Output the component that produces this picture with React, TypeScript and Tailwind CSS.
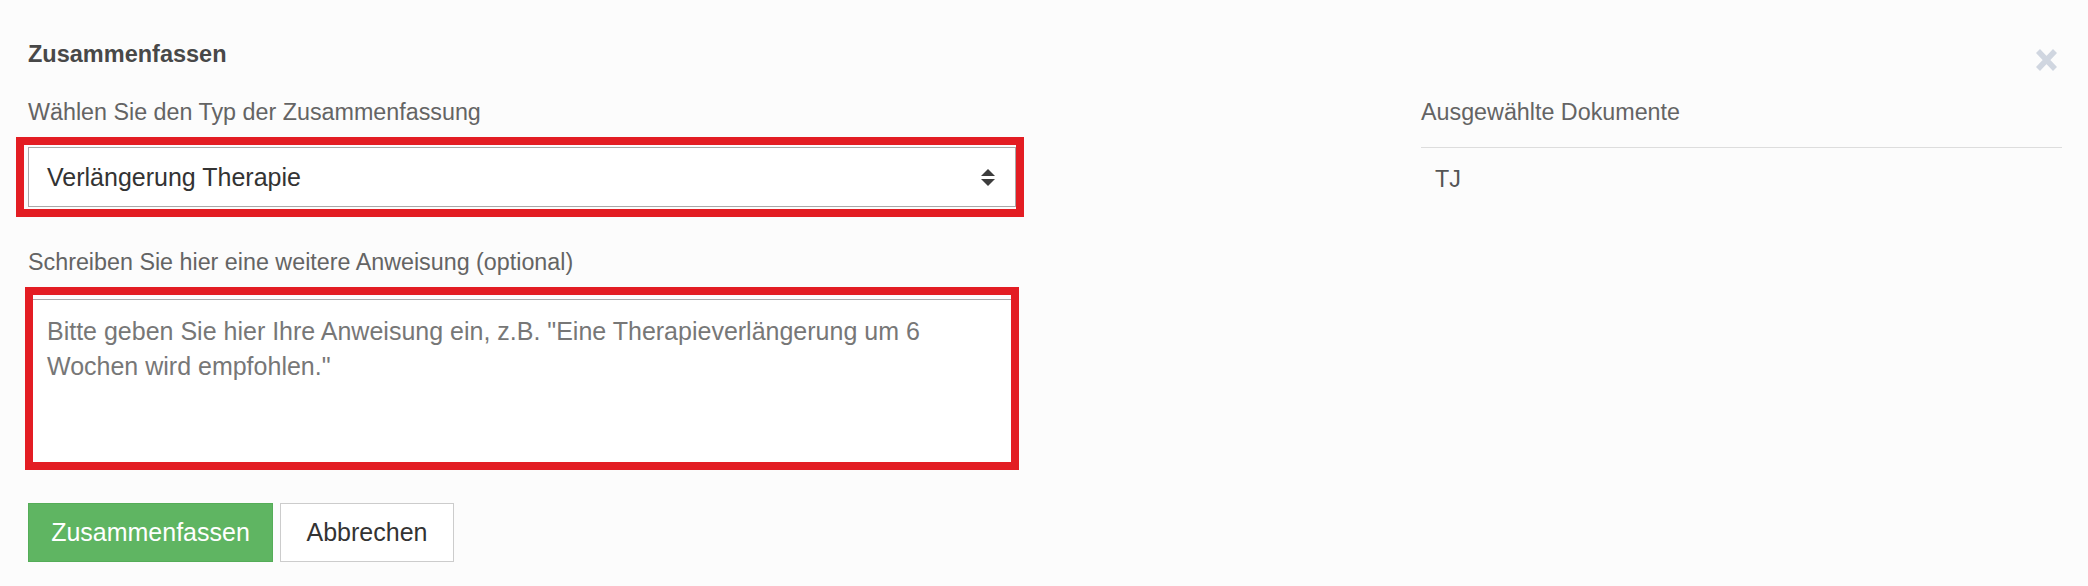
const SortArrows = () => (
  <svg viewBox="0 0 14 17" className="w-[14px] h-[17px]">
    <path d="M0 7 L7 0 L14 7 Z" fill="#3d3d3d" />
    <path d="M0 10 L7 17 L14 10 Z" fill="#3d3d3d" />
  </svg>
);

const CloseIcon = () => (
  <svg viewBox="0 0 25 22" className="w-[25px] h-[22px]">
    <path d="M4 2 L21 20 M21 2 L4 20" stroke="#d0d6e0" strokeWidth="5.5" strokeLinecap="butt" fill="none" />
  </svg>
);

export default function App() {
  return (
    <div
      className="relative w-[2088px] h-[586px] bg-[#fcfcfc] overflow-hidden"
      style={{ fontFamily: '"Liberation Sans", Arial, sans-serif' }}
    >
      <button className="absolute right-[29px] top-[49px] flex">
        <CloseIcon />
      </button>

      <div className="flex pl-[28px] pr-[26px]">
        {/* left column */}
        <div className="w-[988px] flex flex-col">
          <h4 className="pt-[38px] text-[23.5px] leading-[32px] font-bold text-[#484848]">Zusammenfassen</h4>

          <label className="mt-[26px] text-[23.3px] leading-[33px] text-[#646464]">
            Wählen Sie den Typ der Zusammenfassung
          </label>

          <div className="relative mt-[18px]">
            <div className="h-[60px] flex items-center justify-between bg-white border border-[#a9a9a9] pl-[18px] pr-[20px]">
              <span className="text-[25px] leading-[35px] text-[#333]">Verlängerung Therapie</span>
              <SortArrows />
            </div>
            <div className="absolute -left-[12px] -right-[8px] -top-[10px] -bottom-[10px] border-[8px] border-[#e31d23] pointer-events-none" />
          </div>

          <label className="mt-[39px] text-[23.3px] leading-[33px] text-[#646464]">
            Schreiben Sie hier eine weitere Anweisung (optional)
          </label>

          <div className="relative mt-[20px]">
            <textarea
              className="block w-full h-[167px] resize-none bg-white border border-[#a9a9a9] pt-[14px] px-[18px] text-[25px] leading-[35px] text-[#333] placeholder:text-[#777] outline-none"
              placeholder={'Bitte geben Sie hier Ihre Anweisung ein, z.B. "Eine Therapieverlängerung um 6 Wochen wird empfohlen."'}
            />
            <div className="absolute -left-[3px] -right-[3px] -top-[12px] -bottom-[4px] border-[8px] border-[#e31d23] pointer-events-none" />
          </div>

          <div className="mt-[37px] flex gap-[7px]">
            <button className="w-[245px] h-[59px] bg-[#5fb562] border border-[#55ad58] text-white text-[25px] leading-[35px]">
              Zusammenfassen
            </button>
            <button className="w-[174px] h-[59px] bg-white border border-[#cccccc] text-[#333] text-[25px] leading-[35px]">
              Abbrechen
            </button>
          </div>
        </div>

        {/* right column */}
        <div className="ml-auto w-[641px] pt-[96px] flex flex-col">
          <div className="text-[23.3px] leading-[33px] text-[#646464]">Ausgewählte Dokumente</div>
          <div className="mt-[18px] border-t border-[#dddddd]" />
          <div className="mt-[15px] pl-[14px] text-[23.3px] leading-[33px] text-[#555]">TJ</div>
        </div>
      </div>
    </div>
  );
}
